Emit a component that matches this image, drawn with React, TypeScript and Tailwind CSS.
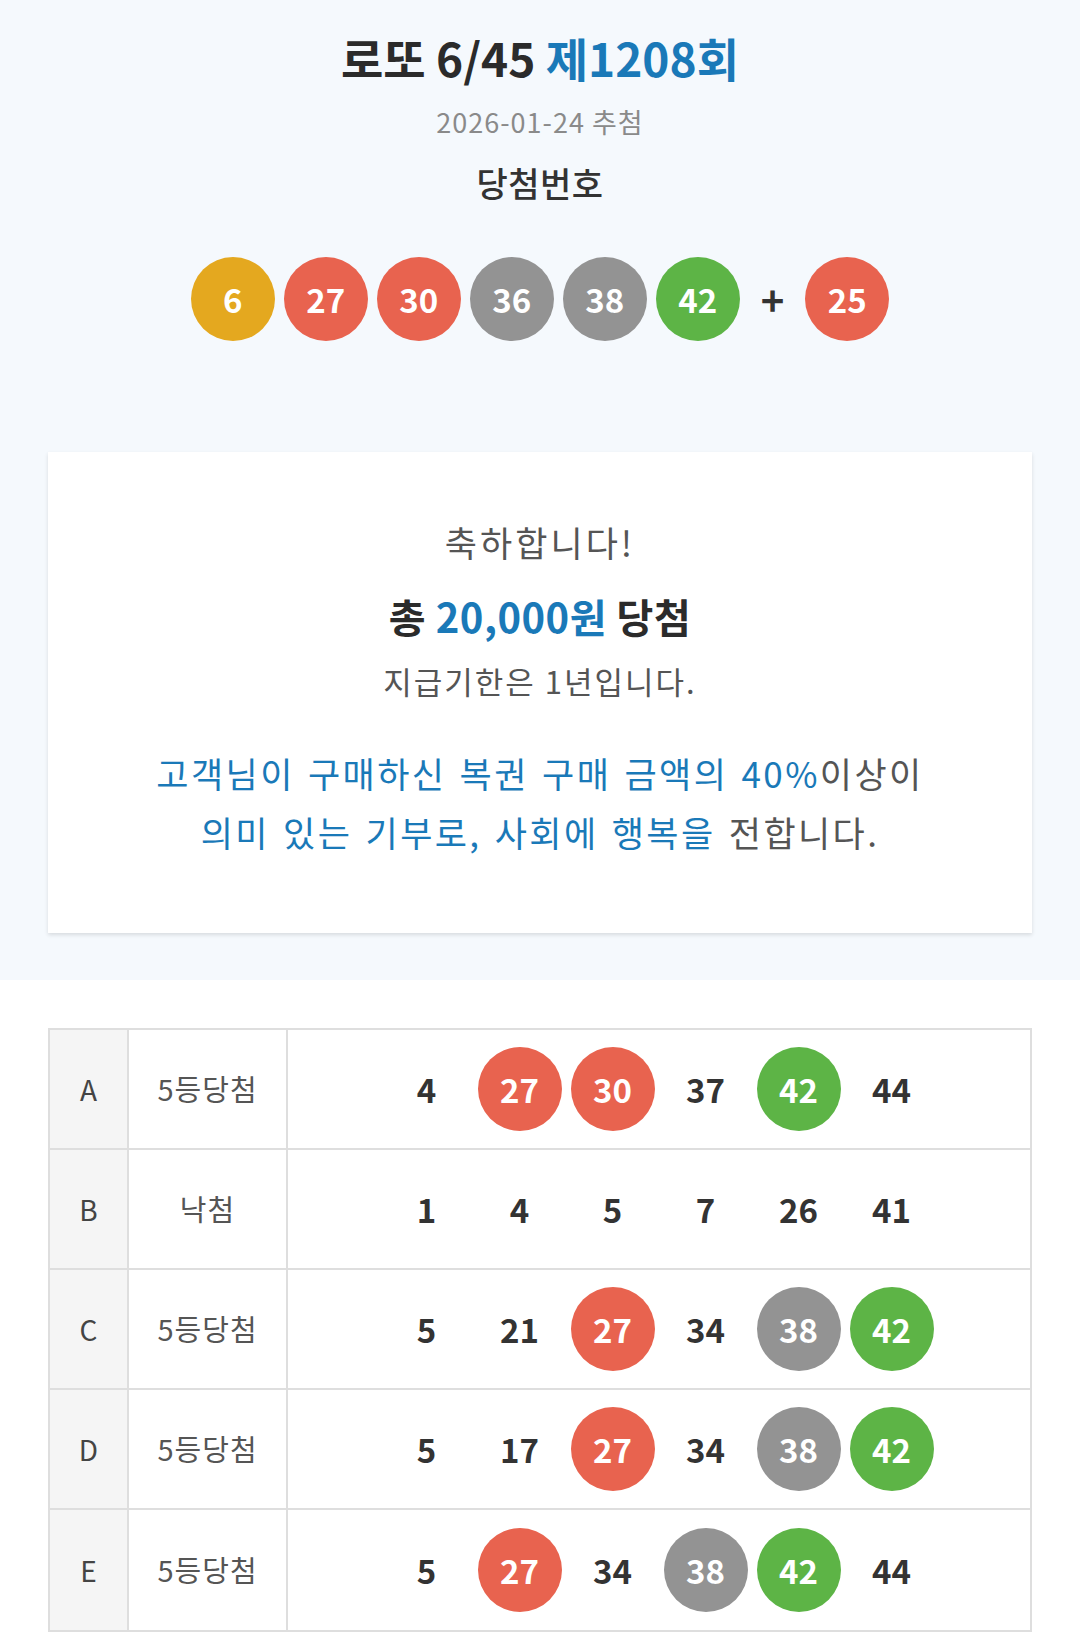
import React from "react";

const FONT = "font-['Noto_Sans_CJK_KR','Noto_Sans',sans-serif]";

// ball colour by number range, like the lottery site does
function ballColor(n: number) {
  if (n <= 10) return "bg-[#e4a81f]";
  if (n <= 20) return "bg-[#3b8fd6]";
  if (n <= 30) return "bg-[#e8634f]";
  if (n <= 40) return "bg-[#939393]";
  return "bg-[#5db446]";
}

const winning = [6, 27, 30, 36, 38, 42];
const bonus = 25;

const games = [
  { id: "A", result: "5등당첨", nums: [4, 27, 30, 37, 42, 44] },
  { id: "B", result: "낙첨", nums: [1, 4, 5, 7, 26, 41] },
  { id: "C", result: "5등당첨", nums: [5, 21, 27, 34, 38, 42] },
  { id: "D", result: "5등당첨", nums: [5, 17, 27, 34, 38, 42] },
  { id: "E", result: "5등당첨", nums: [5, 27, 34, 38, 42, 44] },
];

function Ball({ n }: { n: number }) {
  return (
    <div
      className={`w-[84px] h-[84px] rounded-full ${ballColor(n)} flex items-center justify-center text-white text-[33px] font-bold leading-none`}
    >
      {n}
    </div>
  );
}

export default function App() {
  const hit = new Set([...winning, bonus]);

  return (
    <div className={`${FONT} w-[1080px] min-h-[1643px] bg-white text-[#333]`}>
      {/* Header + result card */}
      <section className="bg-[#f5f9fd] pt-[26px] pb-[47px]">
        <h1 className="text-center text-[46px] font-bold leading-[62px] text-[#2b2b2b]">
          로또 6/45 <span className="text-[#1a79b8]">제1208회</span>
        </h1>
        <p className="text-center text-[27px] leading-[36px] text-[#8a8a8a] mt-[16px] tracking-[1px]">
          2026-01-24 추첨
        </p>
        <p className="text-center text-[34px] font-medium leading-[44px] text-[#333] mt-[21px] tracking-[0.5px]">
          당첨번호
        </p>

        <div className="flex items-center justify-center mt-[52px]">
          <div className="flex gap-[9px]">
            {winning.map((n) => (
              <Ball key={n} n={n} />
            ))}
          </div>
          <span className="mx-[21px] text-[40px] font-bold leading-none text-[#333]">+</span>
          <Ball n={bonus} />
        </div>

        <div className="mx-[48px] mt-[111px] h-[481px] bg-white shadow-[0_2px_4px_rgba(0,0,0,0.12)] flex flex-col items-center pt-[67px]">
          <p className="text-[35px] leading-[46px] text-[#555] tracking-[3px]">축하합니다!</p>
          <p className="text-[40px] font-bold leading-[52px] text-[#2b2b2b] mt-[25px] tracking-[0.5px]">
            총 <span className="text-[#1a79b8]">20,000원</span> 당첨
          </p>
          <p className="text-[31px] leading-[42px] text-[#555] mt-[18px] tracking-[2px]">지급기한은 1년입니다.</p>
          <p className="text-[35px] leading-[59px] text-center mt-[41px] text-[#555] tracking-[2.4px] [word-spacing:3px]">
            <span className="text-[#1a79b8]">고객님이 구매하신 복권 구매 금액의 40%</span>이상이
            <br />
            <span className="text-[#1a79b8]">의미 있는 기부로, 사회에 행복을</span> 전합니다.
          </p>
        </div>
      </section>

      {/* Purchased games */}
      <section className="px-[48px] pt-[48px]">
        <div className="border-2 border-[#dedede]">
          {games.map((g, i) => (
            <div
              key={g.id}
              className={`flex h-[120px] ${i < games.length - 1 ? "border-b-2 border-[#dedede]" : ""}`}
            >
              <div className="w-[79px] bg-[#f5f5f5] border-r-2 border-[#dedede] flex items-center justify-center text-[28px] text-[#444]">
                {g.id}
              </div>
              <div className="w-[159px] border-r-2 border-[#dedede] flex items-center justify-center text-[29px] text-[#555] tracking-[1px]">
                {g.result}
              </div>
              <div className="flex-1 flex items-center justify-center gap-[9px]">
                {g.nums.map((n) =>
                  hit.has(n) ? (
                    <Ball key={n} n={n} />
                  ) : (
                    <div
                      key={n}
                      className="w-[84px] h-[84px] flex items-center justify-center text-[33px] font-bold text-[#333] leading-none"
                    >
                      {n}
                    </div>
                  )
                )}
              </div>
            </div>
          ))}
        </div>
      </section>
    </div>
  );
}
